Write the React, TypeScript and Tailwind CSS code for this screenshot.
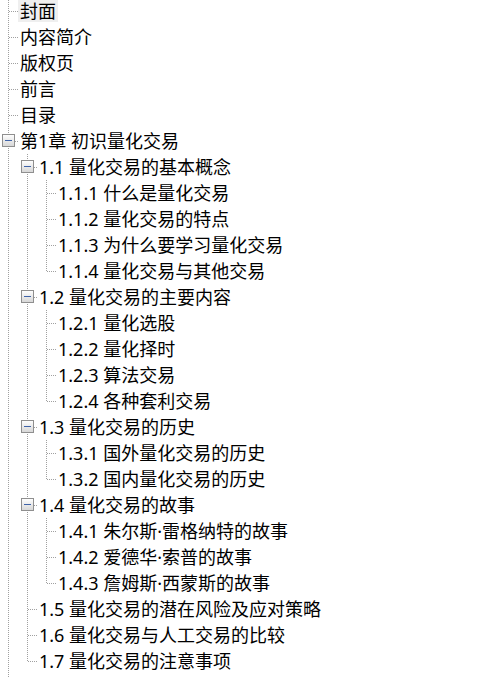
import React from 'react';

type TreeNode = { label: string; children?: TreeNode[] };

const tree: TreeNode[] = [
  { label: '封面' },
  { label: '内容简介' },
  { label: '版权页' },
  { label: '前言' },
  { label: '目录' },
  {
    label: '第1章 初识量化交易',
    children: [
      {
        label: '1.1 量化交易的基本概念',
        children: [
          { label: '1.1.1 什么是量化交易' },
          { label: '1.1.2 量化交易的特点' },
          { label: '1.1.3 为什么要学习量化交易' },
          { label: '1.1.4 量化交易与其他交易' },
        ],
      },
      {
        label: '1.2 量化交易的主要内容',
        children: [
          { label: '1.2.1 量化选股' },
          { label: '1.2.2 量化择时' },
          { label: '1.2.3 算法交易' },
          { label: '1.2.4 各种套利交易' },
        ],
      },
      {
        label: '1.3 量化交易的历史',
        children: [
          { label: '1.3.1 国外量化交易的历史' },
          { label: '1.3.2 国内量化交易的历史' },
        ],
      },
      {
        label: '1.4 量化交易的故事',
        children: [
          { label: '1.4.1 朱尔斯·雷格纳特的故事' },
          { label: '1.4.2 爱德华·索普的故事' },
          { label: '1.4.3 詹姆斯·西蒙斯的故事' },
        ],
      },
      { label: '1.5 量化交易的潜在风险及应对策略' },
      { label: '1.6 量化交易与人工交易的比较' },
      { label: '1.7 量化交易的注意事项' },
    ],
  },
];

const LINE = '#a0a0a0';

// 祖先层的竖向虚线
function Guide({ on }: { on: boolean }) {
  return (
    <svg width="19" height="26" className="shrink-0" shapeRendering="crispEdges">
      {on && <line x1="8.5" y1="0" x2="8.5" y2="26" stroke={LINE} strokeDasharray="1 1" />}
    </svg>
  );
}

// 当前节点的连接线和展开框
function Connector({ last, expandable }: { last: boolean; expandable: boolean }) {
  return (
    <svg width="19" height="26" className="shrink-0" shapeRendering="crispEdges">
      <defs>
        <linearGradient id="boxfill" x1="0" y1="0" x2="0" y2="1">
          <stop offset="0" stopColor="#ffffff" />
          <stop offset="1" stopColor="#d6d6d6" />
        </linearGradient>
      </defs>
      <line x1="8.5" y1="0" x2="8.5" y2={last ? 13 : 26} stroke={LINE} strokeDasharray="1 1" />
      <line x1="9" y1="13.5" x2="19" y2="13.5" stroke={LINE} strokeDasharray="1 1" />
      {expandable && (
        <>
          <rect x="2.5" y="6.5" width="12" height="12" fill="url(#boxfill)" stroke="#8f8f8f" />
          <line x1="5" y1="12.5" x2="12" y2="12.5" stroke="#3f63a8" strokeWidth="1" />
        </>
      )}
    </svg>
  );
}

// 根层后面还有章节（未显示），所以根层竖线一直延续
function renderNodes(nodes: TreeNode[], guides: boolean[], rows: React.ReactNode[], moreBelow: boolean) {
  nodes.forEach((node, i) => {
    const last = i === nodes.length - 1 && !moreBelow;
    const selected = rows.length === 0;
    rows.push(
      <div key={rows.length} className="flex h-[26px] items-center">
        {guides.map((g, k) => (
          <Guide key={k} on={g} />
        ))}
        <Connector last={last} expandable={!!node.children} />
        <span
          className={`ml-[-1px] h-[22px] px-[2px] leading-[22px] whitespace-nowrap text-black ${
            selected ? 'bg-[#efefef]' : ''
          }`}
        >
          {node.label}
        </span>
      </div>
    );
    if (node.children) renderNodes(node.children, [...guides, !last], rows, false);
  });
  return rows;
}

export default function App() {
  const rows = renderNodes(tree, [], [], true);
  return (
    <div
      className="h-[677px] w-[477px] overflow-hidden bg-white text-[18px]"
      style={{ fontFamily: '"Noto Sans", "Noto Sans CJK SC", sans-serif' }}
    >
      <div className="-mt-[2px]">
        {rows}
        {/* 下一章被裁掉，只露出根层竖线 */}
        <div className="flex h-[26px]">
          <Guide on />
        </div>
      </div>
    </div>
  );
}
